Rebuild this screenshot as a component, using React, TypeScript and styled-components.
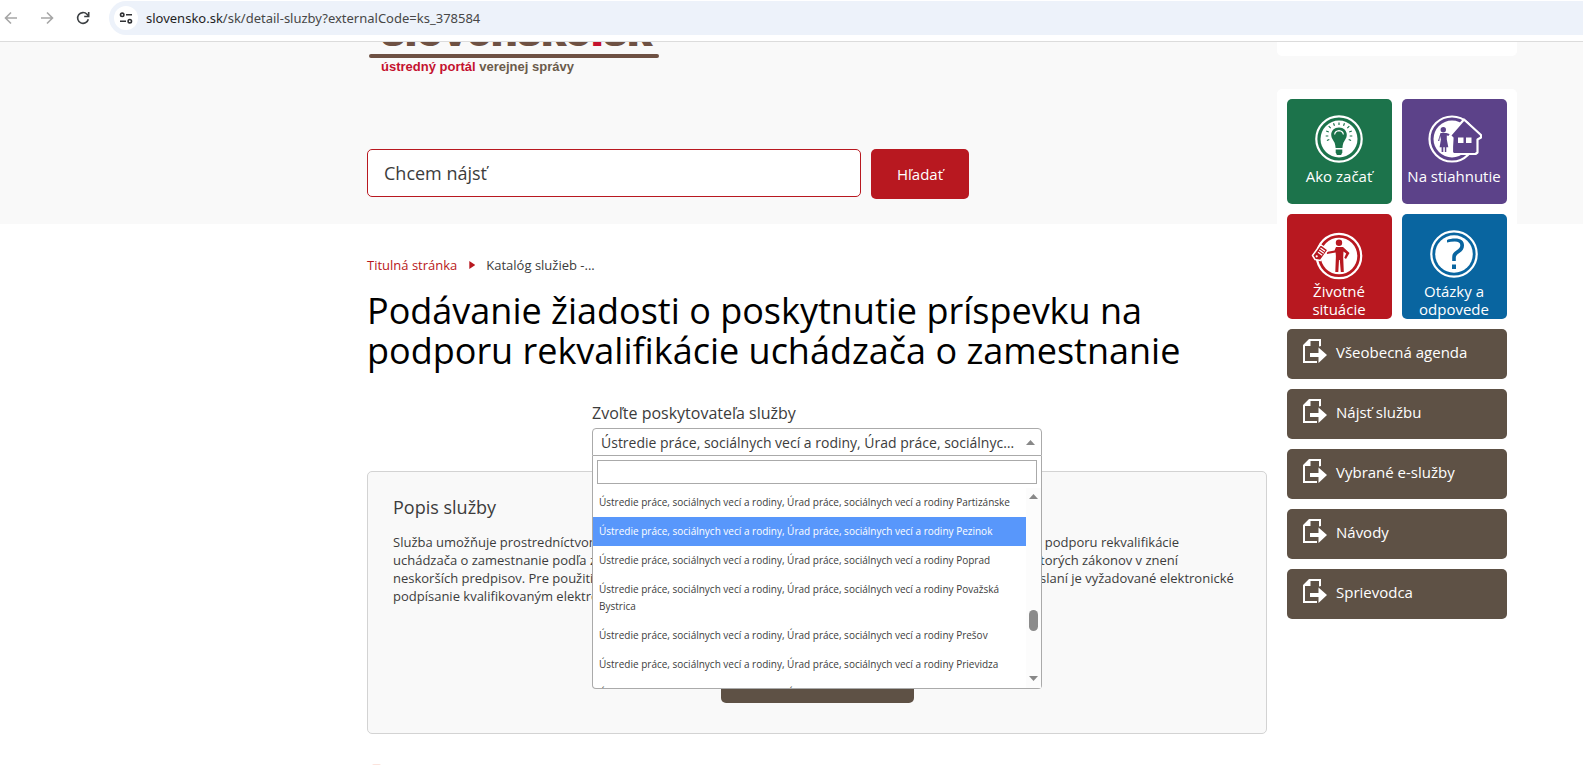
import React from "react";
import styled, { createGlobalStyle } from "styled-components";

const GlobalStyle = createGlobalStyle`
  *, *::before, *::after { box-sizing: border-box; }
  body {
    margin: 0;
    background: #fff;
    color: #3c3c3c;
    font-family: "Open Sans", "Noto Sans", sans-serif;
    font-size: 13px;
    line-height: 18px;
  }
  button, input { font: inherit; }
`;

const colors = {
  red: "#b81820",
  brown: "#5e5145",
  green: "#1c734b",
  purple: "#5c4289",
  blue: "#0965a0",
  pale: "#f9f9f9",
};

const Window = styled.div`
  display: flex;
  flex-direction: column;
  height: 100vh;
  overflow: hidden;
`;

/* Browser toolbar */

const Toolbar = styled.div`
  display: flex;
  flex: none;
  align-items: flex-start;
  height: 42px;
  padding-top: 1px;
  border-bottom: 1px solid #dcdcdc;
`;

const NavButtons = styled.div`
  display: flex;
  align-items: center;
  gap: 20px;
  width: 109px;
  height: 34px;
  padding-left: 3px;
`;

const NavButton = styled.button<{ $active?: boolean }>`
  display: flex;
  width: 16px;
  height: 16px;
  padding: 0;
  border: 0;
  background: none;
  color: ${(p) => (p.$active ? "#3c4043" : "#a6a6a6")};
`;

const AddressBar = styled.div`
  display: flex;
  flex: 1;
  align-items: center;
  gap: 8px;
  height: 34px;
  padding-left: 5px;
  border-radius: 17px 0 0 17px;
  background: #edf2fa;
`;

const SiteInfo = styled.button`
  display: flex;
  align-items: center;
  justify-content: center;
  width: 24px;
  height: 24px;
  padding: 0;
  border: 0;
  border-radius: 50%;
  background: #fff;
  color: #303134;
`;

const Address = styled.div`
  color: #474747;
  font-family: "Noto Sans", sans-serif;
  font-size: 13px;
  b { color: #1f1f1f; font-weight: 400; }
`;

/* Page frame */

const Page = styled.div`
  display: grid;
  flex: 1;
  grid-template-columns: 1fr minmax(0, 900px) 10px 240px 66px;
  grid-template-rows: auto 1fr;
  min-height: 0;
`;

const HeaderBand = styled.div`
  grid-area: 1 / 1 / 2 / -1;
  background: ${colors.pale};
`;

const Header = styled.header`
  grid-area: 1 / 2;
  padding-bottom: 25px;
`;

const Logo = styled.a`
  display: block;
  width: 292px;
  height: 107px;
  padding-left: 2px;
  color: #6e5143;
  font-family: "Liberation Sans", Arial, sans-serif;
  font-weight: 700;
  text-decoration: none;
`;

const LogoName = styled.span`
  display: flex;
  align-items: flex-end;
  height: 12px;
  padding: 0 0 4px 12px;
  overflow: hidden;
  font-size: 43px;
  line-height: 40px;
  -webkit-text-stroke: 2px;
  i { color: #c4122f; font-style: normal; }
`;

const LogoRule = styled.span`
  display: block;
  height: 4px;
  border-radius: 2px;
  background: #6e5143;
`;

const LogoTagline = styled.span`
  display: block;
  padding-left: 12px;
  color: #6b5b4b;
  font-size: 13px;
  b { color: #c4122f; }
`;

const SearchForm = styled.form`
  display: flex;
  gap: 10px;
`;

const SearchInput = styled.input`
  width: 494px;
  height: 48px;
  padding: 0 16px;
  border: 1px solid ${colors.red};
  border-radius: 5px;
  background: #fff;
  color: #3c3c3c;
  font-size: 18px;
  &::placeholder { color: #3c3c3c; opacity: 1; }
`;

const SearchButton = styled.button`
  width: 98px;
  height: 50px;
  border: 0;
  border-radius: 5px;
  background: ${colors.red};
  color: #fff;
  font-size: 15px;
`;

const Main = styled.main`
  grid-area: 2 / 2;
  padding-top: 31px;
`;

const Breadcrumbs = styled.nav`
  display: flex;
  align-items: center;
  height: 20px;
  a { color: ${colors.red}; text-decoration: none; }
`;

const Separator = styled.span`
  width: 6px;
  height: 8px;
  margin: 0 11px 0 12px;
  background: ${colors.red};
  clip-path: polygon(0 0, 100% 50%, 0 100%);
`;

const Title = styled.h1`
  margin: 16px 0 31px;
  color: #000;
  font-size: 36px;
  font-weight: 400;
  line-height: 40px;
`;

/* Provider picker */

const Picker = styled.div`
  position: relative;
  width: 450px;
  margin: 0 auto 15px;
`;

const PickerLabel = styled.label`
  display: block;
  height: 26px;
  font-size: 16px;
  line-height: 22px;
`;

const PickerValue = styled.button`
  display: flex;
  align-items: center;
  width: 100%;
  height: 28px;
  padding: 1px 6px 0 8px;
  border: 1px solid #aaa;
  border-radius: 4px 4px 0 0;
  background: #fff;
  color: #3c3c3c;
  font-size: 14px;
  text-align: left;
  span {
    flex: 1;
    min-width: 0;
    margin-right: 7px;
    overflow: hidden;
    text-overflow: ellipsis;
    white-space: nowrap;
  }
`;

const Arrow = styled.i<{ $down?: boolean }>`
  flex: none;
  width: 9px;
  height: 5px;
  background: #888;
  clip-path: ${(p) =>
    p.$down ? "polygon(0 0, 100% 0, 50% 100%)" : "polygon(50% 0, 100% 100%, 0 100%)"};
`;

const Dropdown = styled.div`
  position: absolute;
  z-index: 1;
  top: 100%;
  left: 0;
  width: 100%;
  border: 1px solid #aaa;
  border-top: 0;
  border-radius: 0 0 4px 4px;
  background: #fff;
`;

const FilterInput = styled.input`
  display: block;
  width: calc(100% - 8px);
  height: 24px;
  margin: 4px;
  border: 1px solid #aaa;
`;

const OptionArea = styled.div`
  display: flex;
  height: 200px;
  overflow: hidden;
`;

const OptionList = styled.ul`
  flex: 1;
  margin: 0;
  padding: 0;
  list-style: none;
`;

const Option = styled.li<{ $selected?: boolean }>`
  padding: 6px;
  background: ${(p) => (p.$selected ? "#5897fb" : "transparent")};
  color: ${(p) => (p.$selected ? "#fff" : "inherit")};
  font-size: 10px;
  line-height: 17px;
`;

const ScrollTrack = styled.div`
  display: flex;
  flex-direction: column;
  align-items: center;
  width: 15px;
  padding: 6px 0 7px;
  background: #fcfcfc;
`;

const ScrollThumb = styled.div`
  width: 9px;
  height: 21px;
  margin: 111px 0 auto;
  border-radius: 5px;
  background: #8b8b8b;
`;

/* Description panel */

const Panel = styled.section`
  display: flex;
  flex-direction: column;
  min-height: 263px;
  padding: 24px 25px 30px;
  border: 1px solid #d3d3d3;
  border-radius: 5px;
  background: ${colors.pale};
  h2 {
    margin: 0 0 15px;
    font-size: 18px;
    font-weight: 400;
    line-height: 22px;
  }
  p { margin: 0; }
`;

const PanelButton = styled.button`
  width: 193px;
  height: 50px;
  margin: auto auto 0;
  border: 0;
  border-radius: 5px;
  background: ${colors.brown};
  color: #fff;
  font-size: 15px;
`;

const NextHint = styled.div`
  width: 9px;
  height: 8px;
  margin: 30px 0 0 5px;
  border-radius: 2px;
  background: #fbe3dc;
`;

/* Side column */

const Aside = styled.aside`
  grid-area: 1 / 4 / 3 / 5;
`;

const CardEnd = styled.div`
  height: 14px;
  margin-bottom: 33px;
  border-radius: 0 0 5px 5px;
  background: #fff;
`;

const SideCard = styled.div`
  display: grid;
  grid-template-columns: 1fr 1fr;
  gap: 10px;
  padding: 10px;
  border-radius: 5px;
  background: #fff;
`;

const Tile = styled.a<{ $color: string }>`
  display: flex;
  flex-direction: column;
  align-items: center;
  height: 105px;
  padding: 14px 1px 0 0;
  overflow: hidden;
  border-radius: 5px;
  background: ${(p) => p.$color};
  color: #fff;
  font-size: 15px;
  line-height: 18px;
  text-align: center;
  text-decoration: none;
  white-space: pre-line;
  svg { flex: none; margin-bottom: 2px; }
`;

const SideLink = styled.a`
  display: flex;
  grid-column: 1 / -1;
  align-items: flex-start;
  gap: 8px;
  height: 50px;
  padding: 10px 16px;
  border-radius: 5px;
  background: ${colors.brown};
  color: #fff;
  font-size: 15px;
  line-height: 26px;
  text-decoration: none;
`;

const BackIcon = () => (
  <svg width="16" height="16" viewBox="0 0 16 16" fill="none" stroke="currentColor" strokeWidth="1.6">
    <path d="M14 8H3M8 2.5 2.5 8 8 13.500" />
  </svg>
);

const ForwardIcon = () => (
  <svg width="16" height="16" viewBox="0 0 16 16" fill="none" stroke="currentColor" strokeWidth="1.6">
    <path d="M2 8h11M8 2.500 13.500 8 8 13.500" />
  </svg>
);

const ReloadIcon = () => (
  <svg width="16" height="16" viewBox="0 0 16 16" fill="none" stroke="currentColor" strokeWidth="1.6">
    <path d="M13.300 9.200A5.400 5.400 0 1 1 12 4.300L13.500 6" />
    <path d="M13.700 2v4.500H9.200" />
  </svg>
);

const TuneIcon = () => (
  <svg width="14" height="14" viewBox="0 0 14 14" fill="none" stroke="currentColor" strokeWidth="1.6">
    <circle cx="3.200" cy="3.800" r="1.700" />
    <path d="M7 3.800h6M1 10.200h6" />
    <circle cx="10.800" cy="10.200" r="1.700" />
  </svg>
);

const Badge = () => (
  <>
    <circle cx="28" cy="26" r="22.700" fill="none" stroke="#fff" strokeWidth="2.200" />
    <circle cx="28" cy="26" r="18.500" fill="#fff" />
  </>
);

const BulbIcon = () => (
  <svg width="56" height="52" viewBox="0 0 56 52">
    <Badge />
    <g fill={colors.green}>
      <path d="M28 14.500c-4.600 0-7.800 3.200-7.800 7.400 0 3.400 2.200 5 3.400 7.800.6 1.500.8 3.300 1 5.300h6.800c.2-2 .4-3.800 1-5.300 1.200-2.800 3.400-4.400 3.400-7.800 0-4.200-3.200-7.400-7.800-7.400z" />
      <path d="M24.700 36.500h6.600v3l-1.200 2.500h-4.200l-1.200-2.500z" />
    </g>
    <path d="M23.600 21.500c.4-2.300 2-3.600 4.400-3.800 2.400.2 4 1.500 4.400 3.800" fill="none" stroke="#fff" strokeWidth="1.200" />
    <path
      d="M28 12V9.500M23.500 12.800l-1-2.500M32.500 12.800l1-2.500M19.700 15.200l-2-2M36.300 15.200l2-2M17.800 19l-2.600-1M38.200 19l2.600-1M17.300 23h-2.600M38.700 23h2.600M18.300 26.500l-2.400 1M37.700 26.500l2.400 1"
      stroke={colors.green}
      strokeWidth="1.200"
    />
  </svg>
);

const HouseIcon = () => (
  <svg width="56" height="52" viewBox="0 0 56 52">
    <circle cx="26" cy="26" r="22.500" fill="none" stroke="#fff" strokeWidth="2.200" />
    <circle cx="26" cy="26" r="18.500" fill="#fff" />
    <g fill={colors.purple}>
      <circle cx="17.300" cy="16.700" r="2.700" />
      <path d="M14.500 20h5.800l4 1.300-.3 1.800-3.200-.5v4l1.500 7.600h-2V39h-1.500v-4.800h-1.500V39h-1.700v-4.800h-2l1.300-7.600-.8-3.600-.8 5h-1.300z" />
    </g>
    <path
      d="M39 6.500 56 22v2.500l-3.500 2V39.500l-2 1.500H28.500l-1.500-1.500v-6l.5-8.500-2.500-2.500z"
      transform="translate(-1)"
      fill={colors.purple}
      stroke="#fff"
      strokeWidth="2.200"
      strokeLinejoin="round"
    />
    <path d="M32 24.500h5.500V30H32zM40 24.500h5.500V30H40z" fill="#fff" />
  </svg>
);

const PersonIcon = () => (
  <svg width="56" height="52" viewBox="0 0 56 52">
    <circle cx="28" cy="28" r="22.200" fill="none" stroke="#fff" strokeWidth="2.200" />
    <circle cx="28" cy="28" r="18.300" fill="#fff" />
    <g fill={colors.red}>
      <circle cx="28" cy="14.800" r="3.200" />
      <path d="M25 19h7l6.500 6-3.500 6-1.700-1.200 1.900-4.300-2.700-2-.3 6 .6 14.500h-3l-1-12h-.8l-.7 12h-3l.6-16-.3-3.600-8.600 1.600-.5-2 8-1.400z" />
    </g>
    <path
      d="M9.500 16.500 17 22 9.500 32.500 4 31.500 1.500 27.500z"
      fill={colors.red}
      stroke="#fff"
      strokeWidth="1.500"
      strokeLinejoin="round"
    />
    <path d="M9.500 20 14 23.300M8.300 22l4.500 3.300M7 24.200l4.200 3" stroke="#fff" strokeWidth="1.200" />
    <circle cx="5.700" cy="28.300" r="1.100" fill="#fff" />
  </svg>
);

const QuestionIcon = () => (
  <svg width="56" height="52" viewBox="0 0 56 52">
    <circle cx="28" cy="26" r="22.700" fill="none" stroke="#fff" strokeWidth="2.200" />
    <circle cx="28" cy="26" r="18.800" fill="#fff" />
    <path
      d="M21 14.500v-2.500c2-1 5-1.500 8-1.500 6 0 9 2.500 9 7 0 3.500-1.600 5.500-4.700 7.600-2.600 1.800-3.500 2.700-3.500 5v3h-3.600v-3.600c0-3.400 1.200-5 4.200-7 2.700-1.900 3.900-2.900 3.900-5.200 0-2.600-1.900-3.800-5.500-3.800-2.800 0-5.300.4-7.800 1z"
      fill={colors.blue}
    />
    <path d="M26 36.500h4v4.500h-4z" fill={colors.blue} />
  </svg>
);

const DocumentIcon = () => (
  <svg width="25" height="25" viewBox="0 0 25 25" fill="#fff">
    <path d="M6 0h12v7l-2 .500V2H7.500v5H2v15h12v2H0V6z" />
    <path d="M7 14h8.500V8.500L24 16l-8.500 8v-6H7z" />
  </svg>
);

const provider = "Ústredie práce, sociálnych vecí a rodiny, Úrad práce, sociálnych vecí a rodiny";

const towns = [
  "Partizánske",
  "Pezinok",
  "Poprad",
  "Považská Bystrica",
  "Prešov",
  "Prievidza",
  "Púchov",
];

const tiles = [
  { text: "Ako začať", color: colors.green, icon: <BulbIcon /> },
  { text: "Na stiahnutie", color: colors.purple, icon: <HouseIcon /> },
  { text: "Životné\nsituácie", color: colors.red, icon: <PersonIcon /> },
  { text: "Otázky a\nodpovede", color: colors.blue, icon: <QuestionIcon /> },
];

const links = ["Všeobecná agenda", "Nájsť službu", "Vybrané e-služby", "Návody", "Sprievodca"];

export default function App() {
  return (
    <Window>
      <GlobalStyle />
      <Toolbar>
        <NavButtons>
          <NavButton aria-label="Späť"><BackIcon /></NavButton>
          <NavButton aria-label="Dopredu"><ForwardIcon /></NavButton>
          <NavButton aria-label="Obnoviť" $active><ReloadIcon /></NavButton>
        </NavButtons>
        <AddressBar>
          <SiteInfo aria-label="Informácie o stránke"><TuneIcon /></SiteInfo>
          <Address><b>slovensko.sk</b>/sk/detail-sluzby?externalCode=ks_378584</Address>
        </AddressBar>
      </Toolbar>

      <Page>
        <HeaderBand />
        <Header>
          <Logo href="#">
            <LogoName><span>slovensko<i>.</i>sk</span></LogoName>
            <LogoRule />
            <LogoTagline><b>ústredný portál</b> verejnej správy</LogoTagline>
          </Logo>
          <SearchForm>
            <SearchInput type="text" placeholder="Chcem nájsť" aria-label="Chcem nájsť" />
            <SearchButton type="button">Hľadať</SearchButton>
          </SearchForm>
        </Header>

        <Main>
          <Breadcrumbs>
            <a href="#">Titulná stránka</a>
            <Separator />
            <span>Katalóg služieb -...</span>
          </Breadcrumbs>
          <Title>
            Podávanie žiadosti o poskytnutie príspevku na podporu rekvalifikácie uchádzača o
            zamestnanie
          </Title>

          <Picker>
            <PickerLabel htmlFor="provider">Zvoľte poskytovateľa služby</PickerLabel>
            <PickerValue id="provider" type="button" aria-expanded="true">
              <span>{provider} Pezinok</span>
              <Arrow />
            </PickerValue>
            <Dropdown>
              <FilterInput type="text" aria-label="Filtrovať poskytovateľov" />
              <OptionArea>
                <OptionList role="listbox">
                  {towns.map((town) => (
                    <Option
                      key={town}
                      role="option"
                      aria-selected={town === "Pezinok"}
                      $selected={town === "Pezinok"}
                    >
                      {provider} {town}
                    </Option>
                  ))}
                </OptionList>
                <ScrollTrack>
                  <Arrow />
                  <ScrollThumb />
                  <Arrow $down />
                </ScrollTrack>
              </OptionArea>
            </Dropdown>
          </Picker>

          <Panel>
            <h2>Popis služby</h2>
            <p>
              Služba umožňuje prostredníctvom elektronického formulára podávanie žiadosti o
              poskytnutie príspevku na podporu rekvalifikácie uchádzača o zamestnanie podľa zákona
              č. 5/2004 Z. z. o službách zamestnanosti a o zmene a doplnení niektorých zákonov v
              znení neskorších predpisov. Pre použitie služby je potrebné vyplniť a odoslať celý
              formulár žiadosti a aj pri jej odoslaní je vyžadované elektronické podpísanie
              kvalifikovaným elektronickým podpisom.
            </p>
            <PanelButton type="button">Prejsť na službu</PanelButton>
          </Panel>
          <NextHint />
        </Main>

        <Aside>
          <CardEnd />
          <SideCard>
            {tiles.map((tile) => (
              <Tile key={tile.text} href="#" $color={tile.color}>
                {tile.icon}
                {tile.text}
              </Tile>
            ))}
            {links.map((text) => (
              <SideLink key={text} href="#">
                <DocumentIcon />
                {text}
              </SideLink>
            ))}
          </SideCard>
        </Aside>
      </Page>
    </Window>
  );
}
